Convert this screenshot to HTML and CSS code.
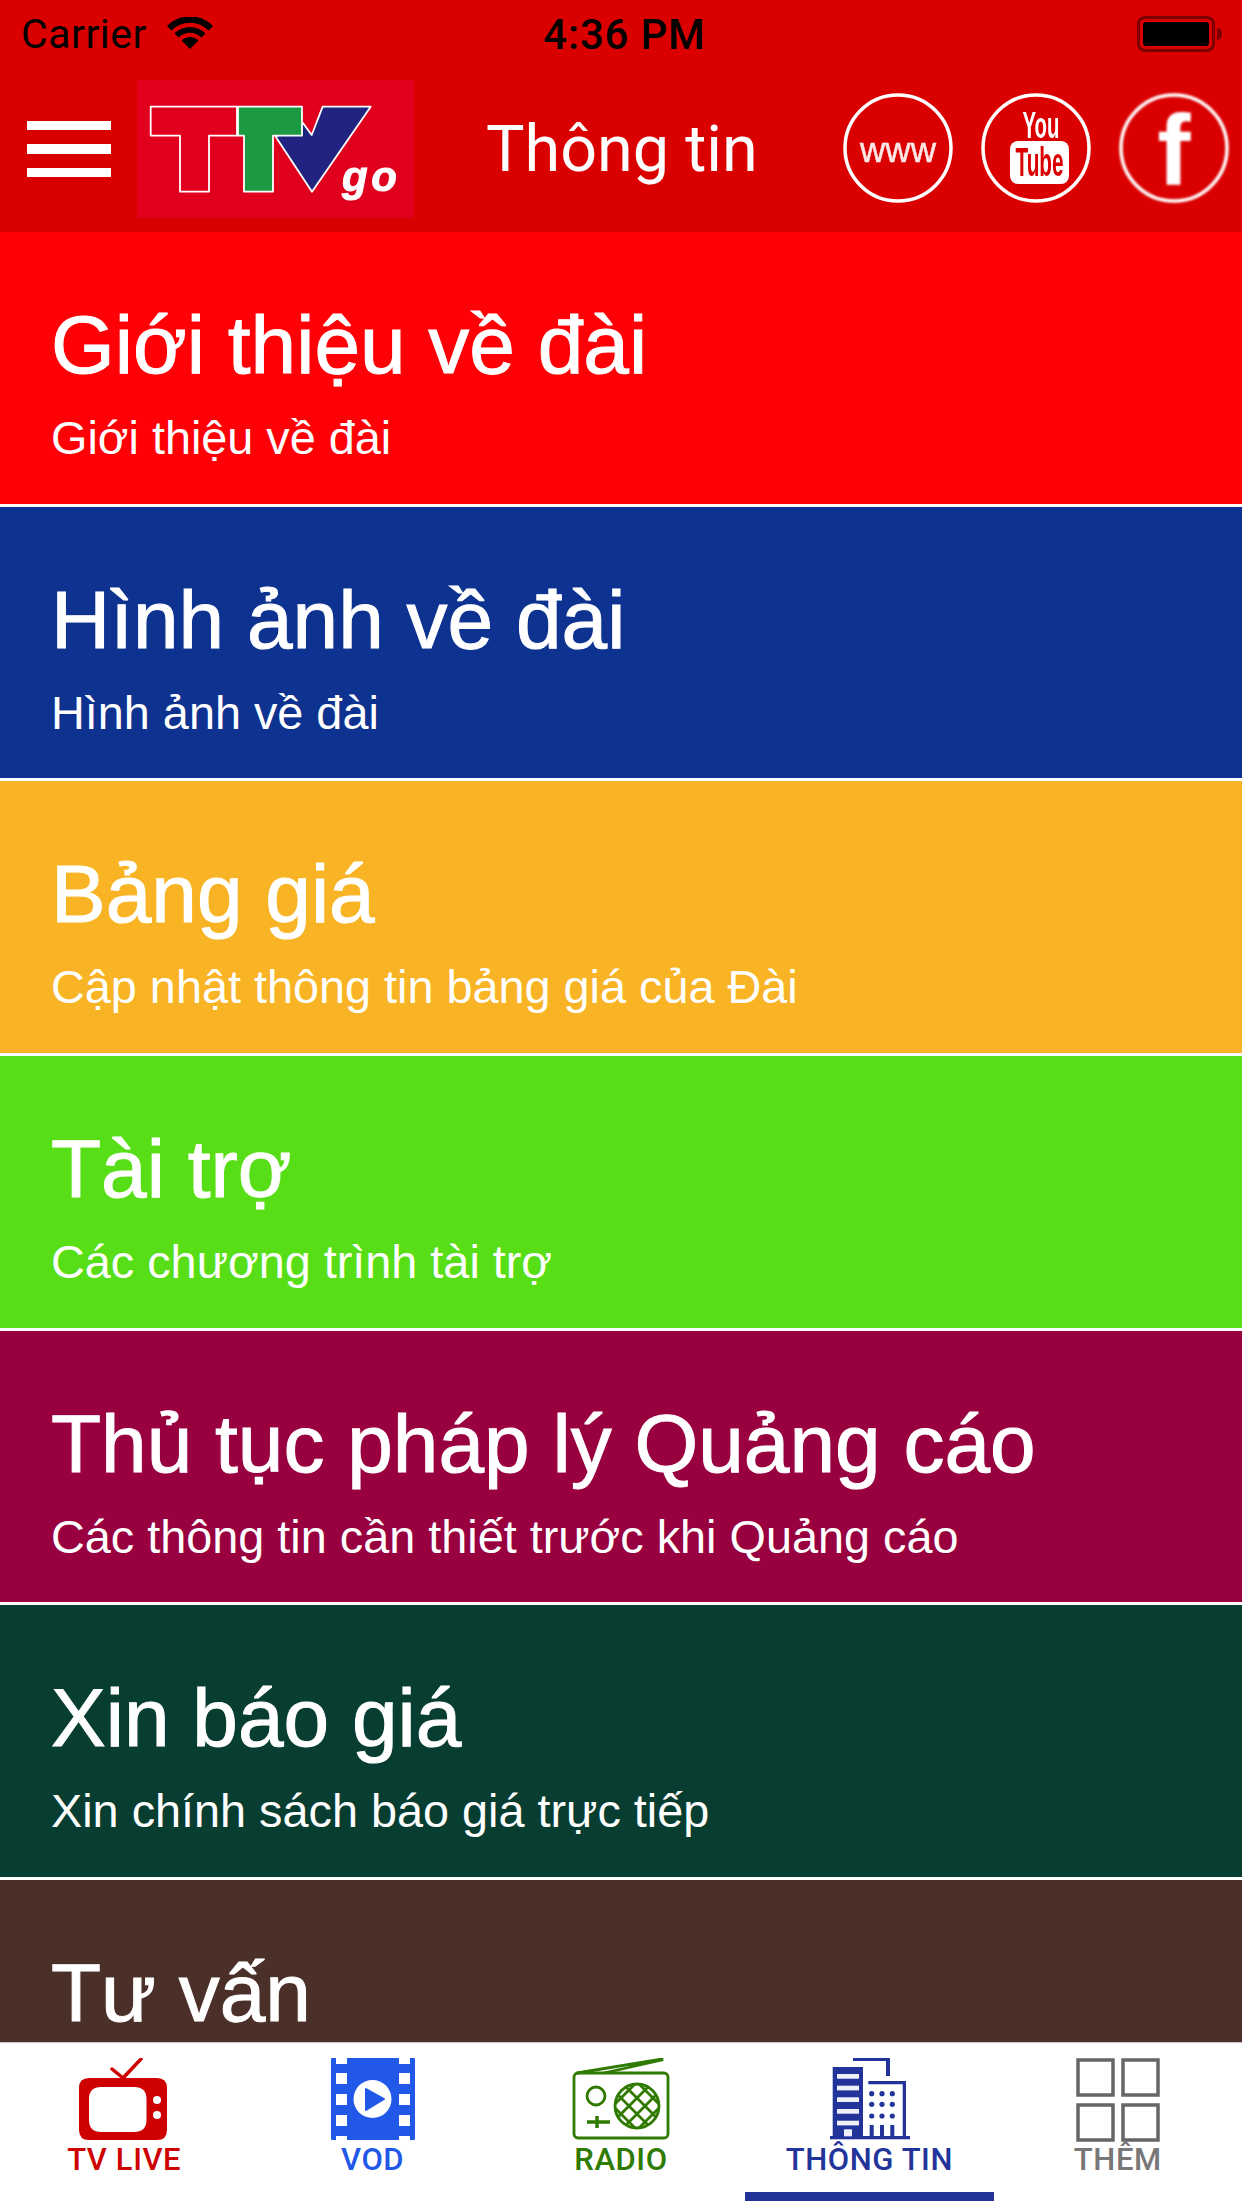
FILE: index.html
```html
<!DOCTYPE html>
<html lang="vi">
<head>
<meta charset="utf-8">
<title>Thông tin</title>
<link rel="stylesheet" href="styles.css">
</head>
<body>
<div class="app">
  <header class="top">
    <div class="status">
      <div class="status-left">
        <span class="carrier">Carrier</span>
        <svg class="wifi" viewBox="0 0 46 32"><path d="M23 32 14.500 23.500A12 12 0 0 1 31.500 23.500Z"/><path d="M11.500 20.500 7.500 16.500A22 22 0 0 1 38.500 16.500L34.500 20.500A16.500 16.500 0 0 0 11.500 20.500Z"/><path d="M4.500 13.500 0 9A32 32 0 0 1 46 9L41.500 13.500A26 26 0 0 0 4.500 13.500Z"/></svg>
      </div>
      <span class="time">4:36 PM</span>
      <div class="status-right"><div class="battery"><span class="battery-fill"></span></div></div>
    </div>
    <nav class="nav">
      <div class="burger"><span></span><span></span><span></span></div>
      <svg class="logo" viewBox="0 0 277 138">
        <rect width="277" height="138" fill="#e0001e"/>
        <path d="M13.700 26.700H100V55.700H72V111.700H43V55.700H13.700Z" fill="#e0001e" stroke="#fff" stroke-width="1.800" stroke-linejoin="round"/>
        <path d="M185.700 26.700H233.700L175 111.700 138.700 56.700 166 43 174.700 55Z" fill="#20237f" stroke="#fff" stroke-width="1.800" stroke-linejoin="round"/>
        <path d="M101 26.700H165V55.700H136V111.700H107V55.700H101Z" fill="#1b9a41" stroke="#fff" stroke-width="1.800" stroke-linejoin="round"/>
        <text x="205" y="111" class="logo-go">go</text>
      </svg>
      <h1 class="nav-title">Thông tin</h1>
      <div class="socials">
        <svg class="social" viewBox="0 0 110 110"><circle cx="55" cy="55" r="53" class="ring"/><text x="55" y="69" text-anchor="middle" class="www">www</text></svg>
        <svg class="social" viewBox="0 0 110 110"><circle cx="55" cy="55" r="53" class="ring"/><text x="60" y="45" text-anchor="middle" class="yt-you" textLength="37" lengthAdjust="spacingAndGlyphs">You</text><rect x="29" y="48" width="59" height="43" rx="8" fill="#fff"/><text x="58.500" y="83" text-anchor="middle" class="yt-tube" textLength="48" lengthAdjust="spacingAndGlyphs">Tube</text></svg>
        <svg class="social social-f" viewBox="0 0 110 110"><circle cx="55" cy="55" r="53" class="ring"/><text x="55" y="92" text-anchor="middle" class="fb">f</text></svg>
      </div>
    </nav>
  </header>

  <main class="list">
    <a class="row row-red"><div class="row-title">Giới thiệu về đài</div><div class="row-sub">Giới thiệu về đài</div></a>
    <a class="row row-blue"><div class="row-title">Hình ảnh về đài</div><div class="row-sub">Hình ảnh về đài</div></a>
    <a class="row row-yellow"><div class="row-title">Bảng giá</div><div class="row-sub">Cập nhật thông tin bảng giá của Đài</div></a>
    <a class="row row-green"><div class="row-title">Tài trợ</div><div class="row-sub">Các chương trình tài trợ</div></a>
    <a class="row row-plum"><div class="row-title">Thủ tục pháp lý Quảng cáo</div><div class="row-sub">Các thông tin cần thiết trước khi Quảng cáo</div></a>
    <a class="row row-teal"><div class="row-title">Xin báo giá</div><div class="row-sub">Xin chính sách báo giá trực tiếp</div></a>
    <a class="row row-brown"><div class="row-title">Tư vấn</div></a>
  </main>

  <footer class="tabs">
    <div class="tab tab-red">
      <svg class="tab-icon" viewBox="0 0 100 84">
        <path d="M49 20 38 11M49 20 67 1" stroke="#ce0000" stroke-width="3.500" stroke-linecap="round" fill="none"/>
        <path fill-rule="evenodd" fill="#ce0000" d="M15 20H83Q93 20 93 30V72Q93 82 83 82H15Q5 82 5 72V30Q5 20 15 20ZM27 29Q15 29 15 41V62Q15 74 27 74H60Q72.500 74 72.500 62V41Q72.500 29 60 29Z"/>
        <circle cx="83" cy="42" r="4" fill="#fff"/><circle cx="83" cy="57" r="4" fill="#fff"/>
      </svg>
      <span class="tab-label">TV LIVE</span>
    </div>
    <div class="tab tab-blue">
      <svg class="tab-icon" viewBox="0 0 84 84">
        <rect y="0" width="84" height="82" rx="1" fill="#2158e8"/>
        <g fill="#fff">
          <rect x="5" y="0" width="11" height="6"/><rect x="5" y="15" width="11" height="11"/><rect x="5" y="36" width="11" height="11"/><rect x="5" y="57" width="11" height="11"/><rect x="5" y="78" width="11" height="4"/>
          <rect x="68" y="0" width="11" height="6"/><rect x="68" y="15" width="11" height="11"/><rect x="68" y="36" width="11" height="11"/><rect x="68" y="57" width="11" height="11"/><rect x="68" y="78" width="11" height="4"/>
          <circle cx="41.500" cy="41" r="19"/>
        </g>
        <path d="M35 31 53 41 35 52Z" fill="#2158e8" stroke="#2158e8" stroke-width="2" stroke-linejoin="round"/>
      </svg>
      <span class="tab-label">VOD</span>
    </div>
    <div class="tab tab-green">
      <svg class="tab-icon" viewBox="0 0 100 84" fill="none" stroke="#2f7a00" stroke-width="2.800">
        <rect x="3" y="15" width="94" height="65" rx="4"/>
        <path d="M6 15 91 1M33 15 91 2" stroke-linecap="round"/>
        <circle cx="25" cy="38" r="9"/>
        <path d="M16 64H39M26 58V70" stroke-width="3.500"/>
        <circle cx="66" cy="48" r="22"/>
        <clipPath id="spk"><circle cx="66" cy="48" r="22"/></clipPath>
        <path clip-path="url(#spk)" d="M30 20 100 90M30 4 100 74M30 36 100 106M30 -12 100 58M30 76 100 6M30 92 100 22M30 60 100 -10M30 108 100 38"/>
      </svg>
      <span class="tab-label">RADIO</span>
    </div>
    <div class="tab tab-navy">
      <svg class="tab-icon" viewBox="0 0 100 84">
        <g fill="#22349a">
          <path d="M34 0H71V18H67V3H34Z"/>
          <rect x="13.700" y="9" width="30.300" height="70"/>
          <rect x="11" y="78" width="80" height="3.300"/>
          <path d="M49.300 23H87V80H83.700V26.300H49.300Z"/>
          <circle cx="52.700" cy="35.700" r="2.600"/><circle cx="63" cy="35.700" r="2.600"/><circle cx="73.300" cy="35.700" r="2.600"/>
          <circle cx="52.700" cy="46.300" r="2.600"/><circle cx="63" cy="46.300" r="2.600"/><circle cx="73.300" cy="46.300" r="2.600"/>
          <circle cx="52.700" cy="58" r="2.600"/><circle cx="63" cy="58" r="2.600"/><circle cx="73.300" cy="58" r="2.600"/>
          <rect x="50.700" y="67" width="4" height="12"/><rect x="61" y="67" width="4" height="12"/><rect x="71.300" y="67" width="4" height="12"/>
        </g>
        <g fill="#eef0fa">
          <rect x="18" y="16" width="22" height="4.700"/><rect x="18" y="27.700" width="22" height="4.700"/><rect x="18" y="39.300" width="22" height="4.700"/><rect x="18" y="51" width="22" height="4.700"/><rect x="18" y="62.700" width="22" height="4.700"/><rect x="25" y="71.300" width="8" height="7"/>
        </g>
      </svg>
      <span class="tab-label">THÔNG TIN</span>
      <span class="tab-marker"></span>
    </div>
    <div class="tab tab-gray">
      <svg class="tab-icon" viewBox="0 0 84 84" fill="none" stroke="#666" stroke-width="3.500">
        <rect x="2" y="2" width="35" height="35"/><rect x="47" y="2" width="35" height="35"/>
        <rect x="2" y="47" width="35" height="35"/><rect x="47" y="47" width="35" height="35"/>
      </svg>
      <span class="tab-label">THÊM</span>
    </div>
  </footer>
</div>
</body>
</html>
```
FILE: styles.css
```css
* { box-sizing: border-box; margin: 0; padding: 0; }
html, body { width: 1242px; height: 2208px; overflow: hidden; }
body { background: #fff; font-family: "Liberation Sans", Arial, sans-serif; }

.app { display: flex; flex-direction: column; height: 2208px; }

.top { flex: none; height: 232px; background: #db0000; }

.status {
  display: grid; grid-template-columns: 1fr auto 1fr; align-items: center;
  height: 62px; padding: 7px 18px 0 21px;
  font-family: Roboto, sans-serif; color: #000;
}
.status-left { display: flex; align-items: center; gap: 20px; }
.status-right { display: flex; justify-content: flex-end; }
.carrier { font-size: 41px; line-height: 55px; letter-spacing: 0.5px; }
.wifi { width: 46px; height: 32px; fill: #000; margin-top: -4px; }
.time { font-size: 42px; font-weight: 500; line-height: 55px; letter-spacing: 0.8px; margin-left: 4px; }
.battery {
  width: 78px; height: 36px; border: 3px solid #7d0000; border-radius: 8px;
  padding: 3px; position: relative; margin: -2px 9px 0 0;
}
.battery::after {
  content: ""; position: absolute; right: -10px; top: 9px;
  width: 5px; height: 12px; background: #7d0000; border-radius: 0 5px 5px 0;
}
.battery-fill { display: block; height: 100%; background: #000; border-radius: 3px; }

.nav { display: flex; align-items: center; height: 170px; padding: 4px 13px 0 27px; }
.burger { display: flex; flex-direction: column; gap: 14px; width: 84px; margin-right: 26px; }
.burger span { display: block; height: 9.500px; background: #fff; }
.logo { width: 277px; height: 138px; flex: none; filter: blur(0.5px); }
.logo-go {
  font: italic 700 42px "Liberation Sans", sans-serif; fill: #fff;
  stroke: #fff; stroke-width: 1px; letter-spacing: 3.500px;
}
.nav-title {
  font: 400 64.700px/1 Roboto, sans-serif; color: #fff;
  margin: 0 0 0 72px; white-space: nowrap;
}
.socials { display: flex; gap: 28px; margin: -2px 0 0 auto; }
.social { width: 110px; height: 110px; display: block; overflow: visible; filter: blur(0.5px); }
.social-f { filter: blur(0.9px); }
.ring { fill: none; stroke: #fff; stroke-width: 3.500; }
.www { font: 400 35px "Liberation Sans", sans-serif; fill: #fbe6e6; stroke: #fbe6e6; stroke-width: 0.5px; }
.yt-you { font: 700 37px "Liberation Sans Narrow", "Liberation Sans", sans-serif; fill: #fff; }
.yt-tube { font: 700 41px "Liberation Sans Narrow", "Liberation Sans", sans-serif; fill: #db0000; }
.fb { font: 700 100px "Liberation Sans", sans-serif; fill: #fff; }

.list { flex: 1; min-height: 0; overflow: hidden; }
.row {
  display: block; height: 274.670px; padding: 67px 0 0 51px;
  border-bottom: 3.500px solid #fff; color: #fff;
}
.row-title { font-size: 82px; line-height: 92px; white-space: nowrap; -webkit-text-stroke: 1px #fff; }
.row-sub { font-size: 46.800px; line-height: 56px; margin-top: 19px; white-space: nowrap; }
.row-red { background: #ff0006; }
.row-blue { background: #0e3290; }
.row-yellow { background: #f9b425; }
.row-green { background: #58de17; }
.row-plum { background: #990040; }
.row-teal { background: #083d31; }
.row-brown { background: #4a3029; }

.tabs {
  flex: none; height: 165px; display: grid; grid-template-columns: repeat(5, 1fr);
  background: #fff; box-shadow: 0 -1px 0 #c8c8c8; position: relative;
}
.tab { display: flex; flex-direction: column; align-items: center; padding-top: 15px; position: relative; }
.tab-icon { height: 84px; display: block; filter: blur(0.5px); }
.tab-label { font: 500 31px/34px Roboto, sans-serif; margin-top: 1px; white-space: nowrap; letter-spacing: 0.6px; }
.tab-red .tab-label { color: #ce0000; }
.tab-blue .tab-label { color: #2158e8; }
.tab-green .tab-label { color: #2f7a00; }
.tab-navy .tab-label { color: #22349a; }
.tab-gray .tab-label { color: #777; }
.tab-marker { position: absolute; left: 0; right: 0; top: 149px; height: 9px; background: #22349a; }
```
